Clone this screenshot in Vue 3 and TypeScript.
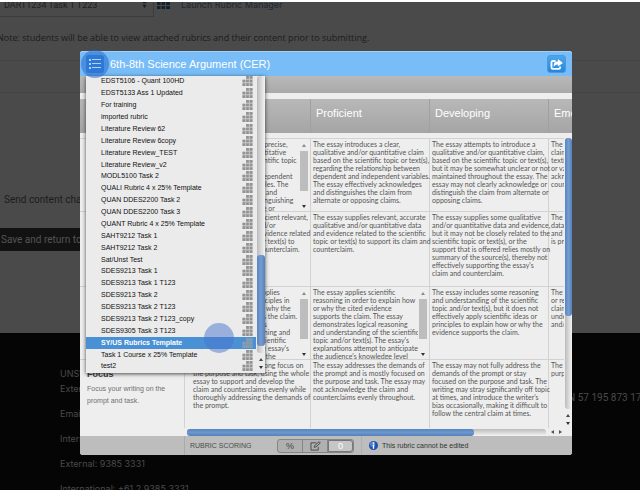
<script setup lang="ts">
import { ref } from 'vue'

interface Cell {
  text: string
  scroll?: boolean
}
interface Row {
  name: string
  note: string
  size: string
  cells: Cell[]
}

const rubrics: string[] = [
  'EDST5106 - Quant 100HD',
  'EDST5133 Ass 1 Updated',
  'For training',
  'imported rubric',
  'Literature Review 62',
  'Literature Review 6copy',
  'Literature Review_TEST',
  'Literature Review_v2',
  'MODL5100 Task 2',
  'QUALI Rubric 4 x 25% Template',
  'QUAN DDES2200 Task 2',
  'QUAN DDES2200 Task 3',
  'QUANT Rubric 4 x 25% Template',
  'SAHT9212 Task 1',
  'SAHT9212 Task 2',
  'Sat/Unst Test',
  'SDES9213 Task 1',
  'SDES9213 Task 1 T123',
  'SDES9213 Task 2',
  'SDES9213 Task 2 T123',
  'SDES9213 Task 2 T123_copy',
  'SDES9305 Task 3 T123',
  'SY/US Rubrics Template',
  'Task 1 Course x 25% Template',
  'test2',
]
const selected = ref('SY/US Rubrics Template')

const levels: string[] = ['', 'Proficient', 'Developing', 'Emerging']

const rows: Row[] = [
  {
    name: '',
    note: '',
    size: 'short',
    cells: [
      {
        scroll: true,
        text: 'The essay introduces a precise,\nqualitative and/or quantitative\nclaim based on the scientific topic\nor text(s), regarding the\nrelationship between dependent\nand independent variables. The\nessay effectively claims and\nacknowledges and distinguishing\nthe claim from alternate or',
      },
      {
        text: 'The essay introduces a clear,\nqualitative and/or quantitative claim\nbased on the scientific topic or text(s),\nregarding the relationship between\ndependent and independent variables.\nThe essay effectively acknowledges\nand distinguishes the claim from\nalternate or opposing claims.',
      },
      {
        text: 'The essay attempts to introduce a\nqualitative and/or quantitative claim,\nbased on the scientific topic or text(s),\nbut it may be somewhat unclear or not\nmaintained throughout the essay. The\nessay may not clearly acknowledge or\ndistinguish the claim from alternate or\nopposing claims.',
      },
      { text: 'The essay\nclaim\ntext(s)\nor vague\nacknow\ncounter' },
    ],
  },
  {
    name: '',
    note: '',
    size: 'tall',
    cells: [
      {
        text: 'The essay supplies sufficient relevant,\naccurate qualitative and/or\nquantitative data and evidence related\nto the scientific topic or text(s) to\nsupport its claim and counterclaim.',
      },
      {
        text: 'The essay supplies relevant, accurate\nqualitative and/or quantitative data\nand evidence related to the scientific\ntopic or text(s) to support its claim and\ncounterclaim.',
      },
      {
        text: "The essay supplies some qualitative\nand/or quantitative data and evidence,\nbut it may not be closely related to the\nscientific topic or text(s), or the\nsupport that is offered relies mostly on\nsummary of the source(s), thereby not\neffectively supporting the essay's\nclaim and counterclaim.",
      },
      { text: 'The essay\ndata\nand evid\nis prov' },
    ],
  },
  {
    name: '',
    note: '',
    size: 'short',
    cells: [
      {
        scroll: true,
        text: "The essay effectively applies\nscientific ideas and principles in\norder to explain how or why the\ncited evidence supports the claim.\nThe essay demonstrates\nlogical reasoning, reasoning and\nunderstanding of the scientific\ntopic and/or text(s). The essay's\nexplanations anticipate the",
      },
      {
        scroll: true,
        text: "The essay applies scientific\nreasoning in order to explain how\nor why the cited evidence\nsupports the claim. The essay\ndemonstrates logical reasoning\nand understanding of the scientific\ntopic and/or text(s). The essay's\nexplanations attempt to anticipate\nthe audience's knowledge level",
      },
      {
        text: 'The essay includes some reasoning\nand understanding of the scientific\ntopic and/or text(s), but it does not\neffectively apply scientific ideas or\nprinciples to explain how or why the\nevidence supports the claim.',
      },
      { text: 'The essay\nor reason\nclaim\nunder\nand/or' },
    ],
  },
  {
    name: 'Focus',
    note: 'Focus your writing on the\nprompt and task.',
    size: 'last',
    cells: [
      {
        text: 'The essay maintains strong focus on\nthe purpose and task, using the whole\nessay to support and develop the\nclaim and counterclaims evenly while\nthoroughly addressing the demands of\nthe prompt.',
      },
      {
        text: 'The essay addresses the demands of\nthe prompt and is mostly focused on\nthe purpose and task. The essay may\nnot acknowledge the claim and\ncounterclaims evenly throughout.',
      },
      {
        text: "The essay may not fully address the\ndemands of the prompt or stay\nfocused on the purpose and task. The\nwriting may stray significantly off topic\nat times, and introduce the writer's\nbias occasionally, making it difficult to\nfollow the central claim at times.",
      },
      { text: 'The essay\npurpose' },
    ],
  },
]
</script>

<template>
  <div class="page">
    <main class="form">
      <div class="attach">
        <div class="picker">
          <select aria-label="Attached rubric">
            <option>DART1234 Task 1 T223</option>
          </select>
          <svg class="updown" viewBox="0 0 6 10" aria-hidden="true"><path d="M3 0 5.500 4H.5zM3 10 .5 6h5z" /></svg>
        </div>
        <svg class="table-icon" viewBox="0 0 13 11" aria-hidden="true">
          <path d="M0 0h3.500v3H0zM4.500 0H8v3H4.500zM9 0h4v3H9zM0 4h3.500v3H0zM4.500 4H8v3H4.500zM9 4h4v3H9zM0 8h3.500v3H0zM4.500 8H8v3H4.500zM9 8h4v3H9z" />
        </svg>
        <a href="#">Launch Rubric Manager</a>
      </div>
      <p class="note">Note: students will be able to view attached rubrics and their content prior to submitting.</p>
      <div class="rule first"></div>
      <div class="rule"></div>
      <p class="send">Send content changes</p>
      <button class="save" type="button">Save and return to</button>
    </main>
    <footer class="site">
      <address>
        <span class="name">UNSW</span>
        <span>External</span>
        <span>Email</span>
        <span>International</span>
        <span>External: 9385 3331</span>
        <span>International: +61 2 9385 3331</span>
      </address>
      <span class="abn">ABN 57 195 873 179</span>
    </footer>

    <section class="modal" aria-label="Rubric">
      <header class="title-bar">
        <button class="menu-button" type="button" aria-label="Rubric list">
          <svg viewBox="0 0 12 10"><path d="M0 0h2v2H0zM0 4h2v2H0zM0 8h2v2H0zM3 0h9v1H3zM3 4h9v1H3zM3 8h9v1H3z" /></svg>
        </button>
        <h1>6th-8th Science Argument (CER)</h1>
        <button class="share" type="button" aria-label="Share">
          <svg viewBox="0 0 14 12">
            <path class="box" d="M6 2.200H3Q1.500 2.200 1.500 4v5Q1.500 10.800 3 10.800h6.500q1.500 0 1.500-1.800V8.200" />
            <path class="arrow" d="M8.500 0 14 4.300 8.500 8.200V6Q5 5.800 4 8.800 3.200 2.800 8.500 2.500z" />
          </svg>
        </button>
      </header>
      <div class="toolbar"></div>

      <div class="sheet">
        <table>
          <colgroup>
            <col class="c-name" />
            <col class="c-first" />
            <col class="c-level" />
            <col class="c-level" />
            <col class="c-level" />
          </colgroup>
          <thead>
            <tr>
              <td></td>
              <th v-for="(level, i) in levels" :key="i" scope="col">{{ level }}</th>
            </tr>
          </thead>
          <tbody>
            <tr class="spacer"><td colspan="5"></td></tr>
            <tr v-for="(row, r) in rows" :key="r" :class="row.size">
              <th scope="row">
                <strong>{{ row.name }}</strong>
                <span>{{ row.note }}</span>
              </th>
              <td v-for="(cell, c) in row.cells" :key="c">
                <div class="cell">
                  <p>{{ cell.text }}</p>
                  <div v-if="cell.scroll" class="mini-scroll" aria-hidden="true">
                    <i class="up"></i><b></b><i class="down"></i>
                  </div>
                </div>
              </td>
            </tr>
          </tbody>
        </table>
        <div class="v-scroll" aria-hidden="true">
          <div class="track"><div class="thumb"></div></div>
          <i class="up"></i><i class="down"></i>
        </div>
      </div>
      <div class="h-scroll" aria-hidden="true">
        <div class="track"><div class="thumb"></div></div>
        <i class="left"></i><i class="right"></i>
      </div>

      <footer class="scoring">
        <span class="label">RUBRIC SCORING</span>
        <div class="modes">
          <button type="button">%</button>
          <button type="button" aria-label="Custom">
            <svg viewBox="0 0 12 11"><path d="M7 2H1v8h8V6.500" /><path d="M4.500 7 5 5 10 .8 11.300 2.200 6.500 6.500z" /></svg>
          </button>
          <button type="button" class="active">0</button>
        </div>
        <div class="info">
          <svg viewBox="0 0 10 10" aria-hidden="true">
            <circle cx="5" cy="5" r="5" fill="#1f4fae" /><circle cx="4" cy="3.500" r="3" fill="#4a80d8" />
            <path d="M4.200 1.500h1.600V3H4.200zM4.200 4h1.600v4.500H4.200z" fill="#fff" />
          </svg>
          <span>This rubric cannot be edited</span>
        </div>
      </footer>

      <div class="dropdown">
        <ul>
          <li v-for="name in rubrics" :key="name">
            <button type="button" :class="{ selected: name === selected }" @click="selected = name">
              <span>{{ name }}</span>
              <svg viewBox="0 0 11 11" aria-hidden="true">
                <path class="tint" d="M4 0h7v11H0V4h4z" />
                <path d="M4 0h3v3H4zM8 0h3v3H8zM0 4h3v3H0zM4 4h3v3H4zM8 4h3v3H8zM0 8h3v3H0zM4 8h3v3H4zM8 8h3v3H8z" />
              </svg>
            </button>
          </li>
        </ul>
        <div class="list-scroll" aria-hidden="true">
          <div class="track"><div class="thumb"></div></div>
          <i class="up"></i><i class="down"></i>
        </div>
      </div>
      <div class="touch on-menu"></div>
      <div class="touch on-item"></div>
    </section>
  </div>
</template>

<style>
body {
  margin: 0;
  background: #050505;
}
</style>

<style scoped>
* {
  box-sizing: border-box;
}
p, h1, ul {
  margin: 0;
  padding: 0;
}
button {
  border: 0;
  padding: 0;
  font: inherit;
  color: inherit;
  background: none;
}
.page {
  position: relative;
  display: flex;
  flex-direction: column;
  height: 100vh;
  min-height: 460px;
  overflow: hidden;
  border-top: 2px solid #fff;
  background: #4a4a4a;
  color: #1c1c1c;
  font: 10px Roboto, "Liberation Sans", sans-serif;
}
.form {
  flex-shrink: 0;
  height: 331px;
}
.attach {
  display: flex;
  align-items: flex-start;
  height: 15px;
}
.picker {
  position: relative;
  width: 154px;
  height: 15px;
  overflow: hidden;
  border: solid #3c3c3c;
  border-width: 0 1px 1px 0;
}
.picker select {
  display: block;
  width: 100%;
  height: 20px;
  margin-top: -7px;
  padding: 0 4px;
  border: 0;
  appearance: none;
  background: none;
  color: #202020;
  font-family: inherit;
  font-size: 9px;
}
.updown {
  position: absolute;
  right: 6px;
  top: -2px;
  width: 5px;
  height: 8px;
  fill: #1c1c1c;
}
.table-icon {
  width: 13px;
  height: 11px;
  margin: -4px 11px 0 3px;
  fill: #14222f;
}
.attach a {
  margin-top: -3px;
  color: #1c2833;
  font-family: Inter, Roboto, sans-serif;
  font-size: 9px;
  line-height: 12px;
  text-decoration: none;
}
.note {
  margin: 14px 0 0 -3px;
  font-family: "Open Sans", Roboto, sans-serif;
  font-size: 9px;
  line-height: 14px;
  white-space: nowrap;
}
.rule {
  height: 32px;
  border-top: 1px solid #444;
}
.rule.first {
  margin-top: 15px;
}
.send {
  margin-top: 69px;
  padding-left: 4px;
  line-height: 14px;
}
.save {
  display: block;
  width: 120px;
  height: 23px;
  margin-top: 21px;
  padding-left: 1px;
  background: #121212;
  color: #555;
  text-align: left;
}
.site {
  display: flex;
  flex: 1;
  min-height: 0;
  justify-content: space-between;
  align-items: flex-start;
  padding: 34px 0 0 60px;
  background: #050505;
  color: #4a4a4a;
}
address {
  display: flex;
  flex-direction: column;
  font-family: Inter, Roboto, sans-serif;
  font-size: 9px;
  font-style: normal;
  white-space: nowrap;
}
address span {
  height: 25px;
  line-height: 14px;
}
address .name {
  height: 15px;
}
.abn {
  margin: 24px -7px 0 0;
  line-height: 14px;
  white-space: nowrap;
}

.modal {
  position: absolute;
  top: 49px;
  right: 68px;
  left: 80px;
  border-radius: 3px;
  background: #eee;
  color: #666;
  font-family: "Liberation Sans", Arial, sans-serif;
}
.title-bar {
  display: flex;
  align-items: center;
  height: 25px;
  padding-right: 6px;
  border-top: 1px solid #9fd0fa;
  border-radius: 3px 3px 0 0;
  background: #78bdf7;
}
.menu-button {
  display: flex;
  align-items: center;
  justify-content: center;
  width: 18px;
  height: 18px;
  margin: 0 6px;
  border-radius: 3px;
  background: #3889df;
}
.menu-button svg {
  position: relative;
  z-index: 2;
  width: 12px;
  height: 10px;
  fill: #a9d3fa;
}
h1 {
  flex: 1;
  color: #fff;
  font-size: 11px;
  font-weight: 400;
  white-space: nowrap;
}
.share {
  display: flex;
  align-items: center;
  justify-content: center;
  width: 19px;
  height: 18px;
  border: 1px solid #4a9ae0;
  border-radius: 3px;
  background: linear-gradient(#4ca5ee, #2487dc);
}
.share svg {
  width: 13px;
  height: 11px;
}
.share .box {
  fill: none;
  stroke: #fff;
  stroke-width: 2;
}
.share .arrow {
  fill: #fff;
}
.toolbar {
  height: 17px;
  background: linear-gradient(#b9b9b9, #a9a9a9);
}
.sheet {
  position: relative;
  height: 335px;
  padding-top: 6px;
  overflow: hidden;
}
table {
  width: 588px;
  table-layout: fixed;
  border-collapse: separate;
  border-spacing: 0;
}
th, td {
  padding: 0;
  text-align: left;
  vertical-align: top;
  font-weight: 400;
}
.c-name {
  width: 105px;
}
.c-first {
  width: 126px;
}
.c-level {
  width: 119px;
}
thead tr {
  height: 34px;
}
thead th, thead td {
  height: 34px;
  border-right: 1px solid #a0a0a0;
  background: linear-gradient(#b8b8b8, #a5a5a5);
}
thead th {
  padding: 7px 0 0 5px;
  color: #fff;
  font-size: 11px;
  line-height: 14px;
}
.spacer td {
  height: 5px;
}
.short {
  height: 73px;
}
.tall {
  height: 75px;
}
.last {
  height: 69px;
}
tbody th, tbody tr:not(.spacer) td {
  border-top: 1px solid #d2d2d2;
  border-right: 1px solid #d2d2d2;
}
tbody th {
  padding: 8px 0 0 7px;
}
tbody th strong {
  display: block;
  height: 15px;
  color: #444;
  font-size: 9px;
  line-height: 12px;
}
tbody th span {
  display: block;
  color: #707070;
  font-size: 7px;
  line-height: 12px;
  white-space: pre-line;
}
.cell {
  display: flex;
  height: 68px;
  overflow-x: visible;
  overflow-y: clip;
  padding: 1px 2px 0;
  color: #555;
  font-family: Lato, "Liberation Sans", sans-serif;
  font-size: 7px;
  line-height: 8px;
}
.short .cell {
  height: 72px;
}
.tall .cell {
  height: 74px;
}
tbody td:nth-child(2) .cell {
  padding-left: 8px;
}
.cell p {
  flex: 1;
  min-width: 0;
  white-space: pre;
}
.mini-scroll {
  display: flex;
  flex-direction: column;
  align-items: center;
  width: 9px;
  height: 68px;
  padding-top: 4px;
  background: #eee;
}
.mini-scroll b {
  width: 8px;
  height: 40px;
  margin: 4px 0 auto;
  background: #bdbdbd;
}
.up, .down {
  width: 0;
  height: 0;
  border: solid transparent;
}
.up {
  border-width: 0 2px 3px;
  border-bottom-color: #888;
}
.down {
  border-width: 3px 2px 0;
  border-top-color: #333;
}
.v-scroll {
  position: absolute;
  top: 45px;
  right: 0;
  bottom: 0;
  display: flex;
  flex-direction: column;
  align-items: center;
  gap: 5px;
  width: 8px;
  padding-bottom: 3px;
  background: #eee;
}
.track {
  border-radius: 3px;
  background: linear-gradient(90deg, #bbb, #f4f4f4);
}
.thumb {
  border-radius: 3px;
  background: linear-gradient(90deg, #5a84bd, #739dd3, #5580b8);
}
.v-scroll .track {
  flex: 1;
  width: 7px;
}
.v-scroll .thumb {
  height: 178px;
}
.h-scroll {
  display: flex;
  align-items: center;
  gap: 5px;
  height: 8px;
  padding: 0 10px 0 2px;
  margin-left: 105px;
}
.h-scroll .track {
  flex: 1;
  height: 7px;
  background: linear-gradient(#bbb, #f4f4f4);
}
.h-scroll .thumb {
  width: 80%;
  height: 7px;
  background: linear-gradient(#5a84bd, #6b96ce, #5580b8);
}
.left, .right {
  width: 0;
  height: 0;
  border: solid transparent;
}
.left {
  border-width: 2px 3px 2px 0;
  border-right-color: #555;
}
.right {
  border-width: 2px 0 2px 3px;
  border-left-color: #555;
}
.scoring {
  display: flex;
  align-items: center;
  height: 19px;
  padding-left: 104px;
  border-radius: 0 0 3px 3px;
  background: #bdbdbd;
  color: #444;
}
.label {
  width: 93px;
  height: 19px;
  padding-left: 5px;
  border-left: 1px solid #aaa;
  color: #4c4c4c;
  line-height: 19px;
  font-size: 7px;
}
.modes {
  display: flex;
  height: 14px;
  border: 1px solid #858585;
  border-radius: 3px;
  background: #b0b0b0;
  font-size: 9px;
}
.modes button {
  display: flex;
  align-items: center;
  justify-content: center;
  width: 25px;
  border-right: 1px solid #858585;
}
.modes svg {
  width: 11px;
  height: 10px;
  fill: none;
  stroke: #444;
}
.modes .active {
  border: 1px solid #777;
  border-radius: 0 3px 3px 0;
  background: #c6c6c6;
  color: #fff;
}
.info {
  display: flex;
  align-items: center;
  gap: 4px;
  height: 19px;
  margin-left: 7px;
  padding-left: 7px;
  border-left: 1px solid #b0b0b0;
  color: #333;
  font-size: 7px;
  white-space: nowrap;
}
.info svg {
  width: 9px;
  height: 9px;
}

.dropdown {
  position: absolute;
  top: 25px;
  left: 6px;
  display: flex;
  width: 179px;
  height: 297px;
  background: #ebebeb;
  box-shadow: 0 1px 4px rgba(0, 0, 0, 0.7);
}
.dropdown ul {
  display: flex;
  flex: 1;
  flex-direction: column;
  list-style: none;
}
.dropdown li {
  display: flex;
  flex: 1;
  min-height: 0;
}
.dropdown li button {
  display: flex;
  flex: 1;
  align-items: center;
  justify-content: space-between;
  padding: 0 3px 1px 15px;
  color: #111;
  font-size: 7px;
  line-height: 10px;
  text-align: left;
}
.dropdown li svg {
  width: 11px;
  height: 10px;
  fill: #939393;
}
.dropdown li .tint {
  fill: #c8c8c8;
}
.dropdown li .selected {
  background: #4a90d4;
  color: #fff;
  font-weight: 700;
}
.dropdown li .selected svg {
  fill: #8c9bab;
}
.dropdown li .selected .tint {
  fill: #6f9ac4;
}
.list-scroll {
  display: flex;
  flex-direction: column;
  align-items: center;
  gap: 5px;
  width: 9px;
  padding-bottom: 4px;
}
.list-scroll .track {
  display: flex;
  flex: 1;
  align-items: flex-end;
  width: 8px;
  padding-bottom: 7px;
}
.list-scroll .thumb {
  width: 8px;
  height: 91px;
}
.list-scroll .up, .v-scroll .up {
  border-bottom-color: #444;
}
.touch {
  position: absolute;
  border-radius: 50%;
  pointer-events: none;
}
.on-menu {
  top: -1px;
  left: 1px;
  width: 28px;
  height: 28px;
  background: rgba(38, 105, 205, 0.55);
}
.on-item {
  top: 272px;
  left: 124px;
  width: 30px;
  height: 30px;
  background: rgba(72, 115, 205, 0.5);
}
</style>
